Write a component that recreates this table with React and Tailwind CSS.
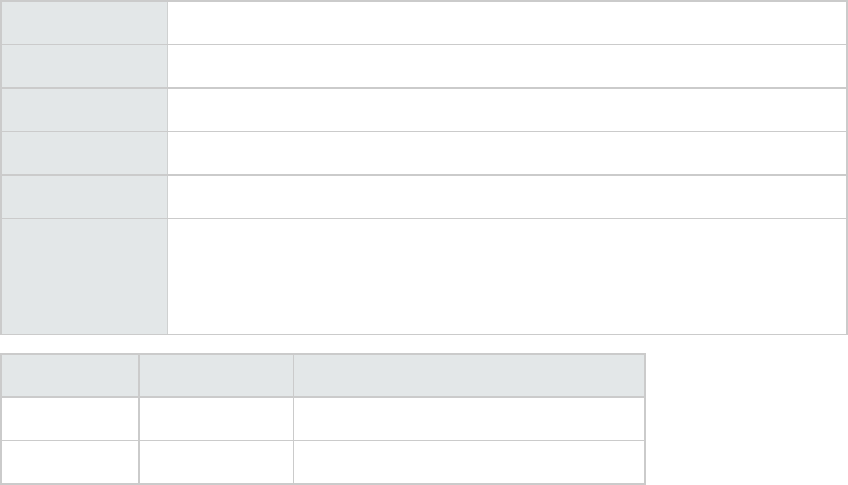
const GROUPS = [
  ['h-[42px]', 'h-[43px]'],
  ['h-[42px]', 'h-[43px]'],
  ['h-[42px]', 'h-[116px]'],
];

function DetailRow({ h, first }) {
  return (
    <div className={`flex ${h} ${first ? '' : 'border-t border-[#cbcbcb]'}`}>
      <div className="w-[166px] shrink-0 bg-[#e3e7e8] border-r border-[#cfd1d1]" />
      <div className="flex-1 bg-white" />
    </div>
  );
}

function DetailTable() {
  return (
    <div className="border-x-2 border-t-2 border-b border-[#cbcbcb]">
      {GROUPS.map((rows, gi) => (
        <div key={gi} className={gi ? 'border-t-2 border-[#cbcbcb]' : ''}>
          {rows.map((h, ri) => (
            <DetailRow key={ri} h={h} first={ri === 0} />
          ))}
        </div>
      ))}
    </div>
  );
}

function ListTable() {
  return (
    <div className="w-[646px] border-2 border-[#cbcbcb]">
      <div className="flex h-[43px] bg-[#e3e7e8] border-b-2 border-[#cbcbcb]">
        <div className="w-[138px] border-r-2 border-[#cbcbcb]" />
        <div className="w-[154px] border-r border-[#cbcbcb]" />
        <div className="flex-1" />
      </div>
      {[0, 1].map((i) => (
        <div key={i} className={`flex bg-white ${i ? 'h-[43px] border-t border-[#cbcbcb]' : 'h-[42px]'}`}>
          <div className="w-[138px] border-r-2 border-[#cbcbcb]" />
          <div className="w-[154px] border-r border-[#cbcbcb]" />
          <div className="flex-1" />
        </div>
      ))}
    </div>
  );
}

export default function App() {
  return (
    <div className="w-[848px] h-[485px] bg-white overflow-hidden" style={{ fontFamily: '"Liberation Sans", Arial, sans-serif' }}>
      <DetailTable />
      <div className="mt-[18px]">
        <ListTable />
      </div>
    </div>
  );
}
